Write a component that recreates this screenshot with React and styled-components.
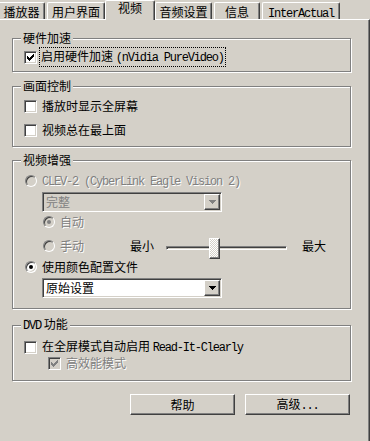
import React from 'react'
import styled, { createGlobalStyle, css } from 'styled-components'

const face = '#d4d0c8'
const shadow = '#808080'
const dark = '#404040'

const GlobalStyle = createGlobalStyle`
  html, body {
    margin: 0;
    background: ${face};
  }
  body {
    font-family: "Noto Sans CJK SC", "Liberation Sans", sans-serif;
    font-size: 12px;
    color: #000;
  }
  #root {
    width: 370px;
    height: 441px;
    overflow: hidden;
  }
`

const raised = css`
  border: 1px solid;
  border-color: #fff ${dark} ${dark} #fff;
  box-shadow: inset -1px -1px 0 ${shadow};
`

const sunken = css`
  border: 1px solid;
  border-color: ${shadow} #fff #fff ${shadow};
  box-shadow: inset 1px 1px 0 ${dark}, inset -1px -1px 0 ${face};
`

const disabledText = css`
  color: ${shadow};
  text-shadow: 1px 1px 0 #fff;
`

const Window = styled.div`
  width: 370px;
  height: 441px;
  display: flex;
  flex-direction: column;
`

const TabStrip = styled.div`
  display: flex;
  align-items: flex-end;
  gap: 2px;
  height: 19px;
  margin-left: -2px;
`

const Tab = styled.div`
  box-sizing: border-box;
  width: ${p => p.w}px;
  height: 17px;
  padding-top: 2px;
  line-height: 14px;
  text-align: center;
  white-space: nowrap;
  border-top: 1px solid #fff;
  border-left: 1px solid #fff;
  border-right: 1px solid ${dark};
  border-radius: 2px 2px 0 0;
  box-shadow: inset -1px 0 0 ${shadow};
  background: ${face};

  ${p => p.active && css`
    position: relative;
    z-index: 1;
    width: ${p.w + 4}px;
    height: 20px;
    padding-top: 0;
    margin: 0 -2px -1px;
  `}
`

const Mono = styled.span`
  font-family: "Liberation Mono", "DejaVu Sans Mono", monospace;
  font-size: 12px;
  letter-spacing: -1.2px;
`

const Page = styled.div`
  box-sizing: border-box;
  width: 370px;
  flex: 1;
  padding: 11px 18px 0 12px;
  border-top: 1px solid #fff;
  border-right: 1px solid ${dark};
  box-shadow: inset -1px 0 0 ${shadow};
  display: flex;
  flex-direction: column;
`

const Group = styled.fieldset`
  margin: ${p => p.mt || 0}px 0 0;
  padding: ${p => p.pt}px 0 ${p => p.pb}px 11px;
  min-width: 0;
  border: 1px solid ${shadow};
  box-shadow: inset 1px 1px 0 #fff, 1px 1px 0 #fff;
  display: flex;
  flex-direction: column;
`

const Legend = styled.legend`
  padding: 0 2px;
  margin-left: -3px;
  line-height: 14px;
  background: ${face};
`

const Row = styled.div`
  display: flex;
  align-items: center;
  height: ${p => p.h || 16}px;
  margin-top: ${p => p.mt || 0}px;
  padding-left: ${p => p.indent || 0}px;
  white-space: nowrap;
`

const Text = styled.span`
  margin-left: 5px;
  line-height: 16px;
  ${p => p.disabled && disabledText}
  ${p => p.focus && css`
    margin-left: 3px;
    padding: 0 1px;
    outline: 1px dotted #000;
  `}
  ${p => p.w && css`
    display: inline-block;
    width: ${p.w}px;
  `}
`

const Box = styled.span`
  box-sizing: border-box;
  width: 13px;
  height: 13px;
  flex: none;
  display: flex;
  align-items: center;
  justify-content: center;
  background: ${p => (p.disabled ? face : '#fff')};
  ${sunken}
`

const checkCols = [2, 3, 4, 3, 2, 1, 0]

const CheckBox = ({ checked, disabled }) => (
  <Box disabled={disabled}>
    {checked && (
      <svg width="7" height="7" viewBox="0 0 7 7" shapeRendering="crispEdges">
        {checkCols.map((y, x) => (
          <rect key={x} x={x} y={y} width="1" height="3" fill={disabled ? shadow : '#000'} />
        ))}
      </svg>
    )}
  </Box>
)

const RadioRing = styled.span`
  box-sizing: border-box;
  width: 12px;
  height: 12px;
  flex: none;
  margin-left: ${p => p.ml || 0}px;
  border-radius: 50%;
  display: flex;
  align-items: center;
  justify-content: center;
  background: ${p => (p.disabled ? face : '#fff')};
  ${sunken}
`

const Dot = styled.span`
  width: 4px;
  height: 4px;
  border-radius: 50%;
  background: ${p => (p.disabled ? shadow : '#000')};
`

const Radio = ({ checked, disabled, ml }) => (
  <RadioRing disabled={disabled} ml={ml}>
    {checked && <Dot disabled={disabled} />}
  </RadioRing>
)

const ComboBox = styled.div`
  box-sizing: border-box;
  width: ${p => p.w}px;
  height: 20px;
  margin-left: 18px;
  margin-top: ${p => p.mt || 0}px;
  display: flex;
  align-items: stretch;
  background: ${p => (p.disabled ? face : '#fff')};
  ${sunken}
  padding: 1px;
`

const ComboValue = styled.span`
  flex: 1;
  padding-left: 2px;
  line-height: 16px;
  ${p => p.disabled && css`color: ${shadow};`}
`

const DropButton = styled.span`
  box-sizing: border-box;
  width: 16px;
  flex: none;
  display: flex;
  align-items: center;
  justify-content: center;
  background: ${face};
  ${raised}
`

const Combo = ({ value, disabled, w, mt }) => (
  <ComboBox w={w} mt={mt} disabled={disabled}>
    <ComboValue disabled={disabled}>{value}</ComboValue>
    <DropButton>
      <svg width="7" height="4" viewBox="0 0 7 4" shapeRendering="crispEdges">
        <path d="M0 0h7v1h-1v1h-1v1h-1v1h-1v-1h-1v-1h-1v-1h-1z" fill={disabled ? shadow : '#000'} />
      </svg>
    </DropButton>
  </ComboBox>
)

const Track = styled.div`
  position: relative;
  box-sizing: border-box;
  width: 121px;
  height: 4px;
  margin: 3px 0 0 12px;
  ${sunken}
`

const Thumb = styled.div`
  position: absolute;
  left: 42px;
  top: -9px;
  box-sizing: border-box;
  width: 11px;
  height: 21px;
  ${raised}
  background: repeating-conic-gradient(#fff 0 25%, ${face} 0 50%) 0 0 / 2px 2px;
`

const SideLabel = styled.span`
  margin-left: ${p => p.ml || 0}px;
  line-height: 16px;
`

const ButtonRow = styled.div`
  display: flex;
  justify-content: flex-end;
  gap: 10px;
  margin-top: 13px;
  padding-right: 1px;
`

const Button = styled.button`
  box-sizing: border-box;
  width: 105px;
  height: 21px;
  padding: 0;
  font: inherit;
  line-height: 17px;
  color: #000;
  background: ${face};
  ${raised}
`

const tabs = [
  { label: '播放器', w: 47 },
  { label: '用户界面', w: 58 },
  { label: '视频', w: 46, active: true },
  { label: '音频设置', w: 57 },
  { label: '信息', w: 46 },
  { label: <Mono>InterActual</Mono>, w: 78 },
]

export default function App() {
  return (
    <>
      <GlobalStyle />
      <Window>
        <TabStrip>
          {tabs.map((t, i) => (
            <Tab key={i} w={t.w} active={t.active}>{t.label}</Tab>
          ))}
        </TabStrip>

        <Page>
          <Group pt={4} pb={6}>
            <Legend>硬件加速</Legend>
            <Row>
              <CheckBox checked />
              <Text focus>启用硬件加速 <Mono>(nVidia PureVideo)</Mono></Text>
            </Row>
          </Group>

          <Group mt={7} pt={5} pb={8}>
            <Legend>画面控制</Legend>
            <Row>
              <CheckBox />
              <Text>播放时显示全屏幕</Text>
            </Row>
            <Row mt={8}>
              <CheckBox />
              <Text>视频总在最上面</Text>
            </Row>
          </Group>

          <Group mt={6} pt={6} pb={10}>
            <Legend>视频增强</Legend>
            <Row>
              <Radio disabled ml={1} />
              <Text disabled><Mono>CLEV-2 (CyberLink Eagle Vision 2)</Mono></Text>
            </Row>
            <Combo value="完整" disabled w={180} mt={3} />
            <Row mt={2} indent={19}>
              <Radio checked disabled />
              <Text disabled>自动</Text>
            </Row>
            <Row mt={5} h={22} indent={19}>
              <Radio disabled />
              <Text disabled w={70}>手动</Text>
              <SideLabel>最小</SideLabel>
              <Track>
                <Thumb />
              </Track>
              <SideLabel ml={15}>最大</SideLabel>
            </Row>
            <Row mt={2}>
              <Radio checked ml={1} />
              <Text>使用颜色配置文件</Text>
            </Row>
            <Combo value="原始设置" w={180} mt={3} />
          </Group>

          <Group mt={8} pt={6} pb={9}>
            <Legend><Mono>DVD</Mono> 功能</Legend>
            <Row>
              <CheckBox />
              <Text>在全屏模式自动启用 <Mono>Read-It-Clearly</Mono></Text>
            </Row>
            <Row indent={24}>
              <CheckBox checked disabled />
              <Text disabled>高效能模式</Text>
            </Row>
          </Group>

          <ButtonRow>
            <Button>帮助</Button>
            <Button>高级<Mono>...</Mono></Button>
          </ButtonRow>
        </Page>
      </Window>
    </>
  )
}
